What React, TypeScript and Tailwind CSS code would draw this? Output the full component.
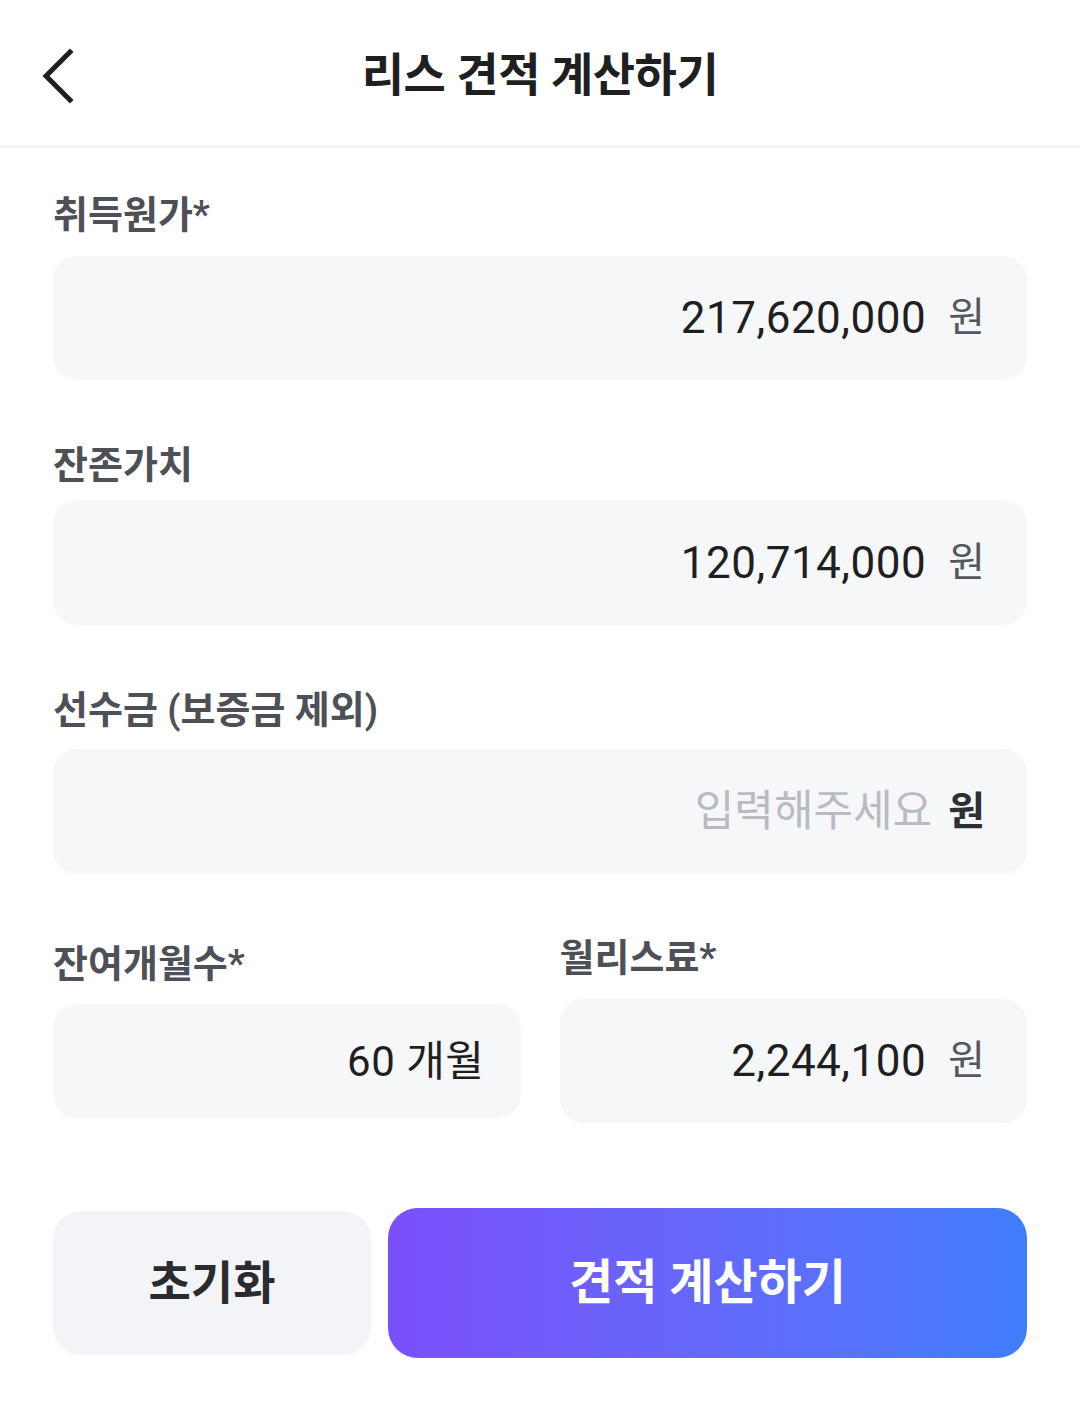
import React from "react";

const font = { fontFamily: 'Roboto, "Noto Sans CJK KR", sans-serif' };

function Field({
  label,
  value,
  unit,
  placeholder,
  labelClass,
  boxClass,
  valueClass = "text-[44px]",
}: {
  label: string;
  value?: string;
  unit?: string;
  placeholder?: string;
  labelClass: string;
  boxClass: string;
  valueClass?: string;
}) {
  return (
    <div className="flex flex-col">
      <div className={`text-[38px] leading-[48px] font-semibold text-[#4e5057] ${labelClass}`}>{label}</div>
      <div className={`flex items-center justify-end rounded-[24px] bg-[#f6f7f9] ${boxClass}`}>
        {value ? (
          <span className={`${valueClass} text-[#1f1f22] tracking-[0.5px]`}>{value}</span>
        ) : (
          <span className="text-[43px] text-[#b9bbc1]">{placeholder}</span>
        )}
        {unit && (
          <span className={`text-[40px] ${value ? "ml-[22px] text-[#55575e]" : "ml-[16px] font-bold text-[#2f3034]"}`}>{unit}</span>
        )}
      </div>
    </div>
  );
}

export default function App() {
  return (
    <div className="w-[1080px] h-[1405px] bg-white" style={font}>
      <header className="relative h-[148px] pt-[6px] flex items-center justify-center border-b-[3px] border-[#f4f4f5]">
        <svg className="absolute left-[36px] top-[46px]" width="44" height="60" viewBox="0 0 44 60">
          <path d="M34 6 L10 30 L34 54" fill="none" stroke="#1f1f22" strokeWidth="5" strokeLinecap="square" />
        </svg>
        <h1 className="text-[46px] font-bold text-[#1f1f22] tracking-[-0.5px]">리스 견적 계산하기</h1>
      </header>
      <main className="px-[53px] pt-[43px] flex flex-col">
        <Field label="취득원가*" value="217,620,000" unit="원" labelClass="mb-[17px]" boxClass="h-[124px] pr-[42px]" />
        <div className="h-[61px]" />
        <Field label="잔존가치" value="120,714,000" unit="원" labelClass="mb-[11px]" boxClass="h-[125px] pr-[42px]" />
        <div className="h-[61px]" />
        <Field label="선수금 (보증금 제외)" placeholder="입력해주세요" unit="원" labelClass="mb-[15px]" boxClass="h-[125px] pr-[42px]" />
        <div className="grid grid-cols-2 gap-[39px] mt-[60px]">
          <div className="pt-[6px]">
            <Field label="잔여개월수*" value="60 개월" valueClass="text-[42px]" labelClass="mb-[16px]" boxClass="h-[114px] pr-[36px]" />
          </div>
          <Field label="월리스료*" value="2,244,100" unit="원" labelClass="mb-[17px]" boxClass="h-[124px] pr-[42px]" />
        </div>
        <div className="flex items-center gap-[17px] mt-[85px]">
          <button className="w-[318px] h-[144px] rounded-[28px] bg-[#f3f4f7] text-[46px] font-bold text-[#2a2b2e]">
            초기화
          </button>
          <button className="flex-1 h-[150px] rounded-[30px] bg-gradient-to-r from-[#7b4ffb] to-[#3f7dfb] text-[48px] font-bold text-white">
            견적 계산하기
          </button>
        </div>
      </main>
    </div>
  );
}
